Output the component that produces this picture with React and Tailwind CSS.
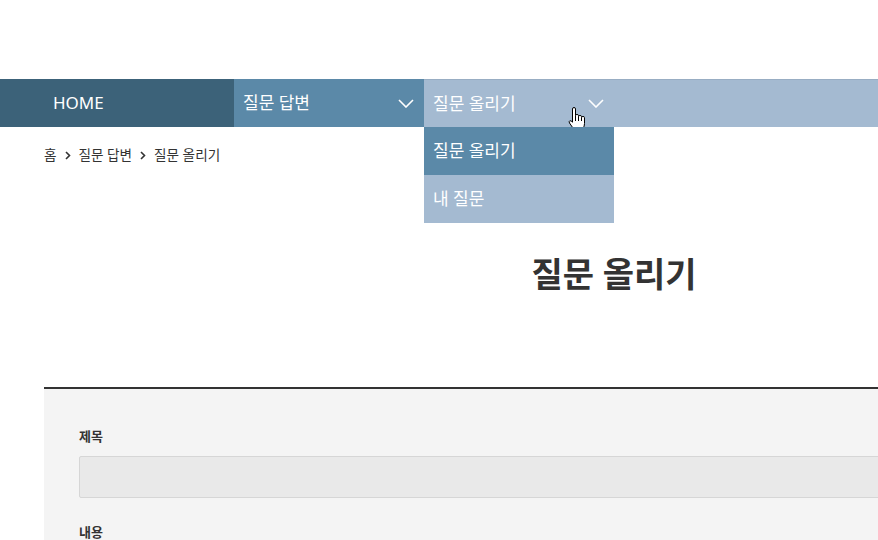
import React from "react";

const Chevron = ({ className = "" }) => (
  <svg className={className} width="16" height="9" viewBox="0 0 16 9" fill="none">
    <path d="M1 1l7 7 7-7" stroke="white" strokeWidth="1.6" />
  </svg>
);

const Crumb = () => (
  <svg width="6" height="9" viewBox="0 0 6 9" fill="none" className="mx-[8px]">
    <path d="M1 1l3.5 3.5L1 8" stroke="#333" strokeWidth="1.6" />
  </svg>
);

const Hand = () => (
  <svg width="18" height="23" viewBox="0 0 18 23" className="absolute left-[568px] top-[107px]">
    <path
      d="M4.5 2Q4.5 0.5 6 0.5Q7.5 0.5 7.5 2V8.5Q7.5 7.5 9 7.5Q10.5 7.5 10.5 8.5V9.5Q10.5 8.5 12 8.5Q13.5 8.5 13.5 9.5V10.5Q13.5 9.5 15 9.5Q16.5 9.5 16.5 10.5V16.5Q16.5 18.5 15 22.5H6L1.5 16Q0.6 14.4 1.8 13.8Q3 13.3 4.5 15.2Z"
      fill="white"
      stroke="black"
      strokeWidth="1"
      strokeLinejoin="round"
    />
    <path d="M7.5 8.5V14M10.5 9.5V14M13.5 10.5V14" stroke="black" strokeWidth="1" />
  </svg>
);

export default function App() {
  return (
    <div
      className="relative w-[878px] h-[540px] overflow-hidden bg-white text-[#333]"
      style={{ fontFamily: '"Noto Sans", "Noto Sans CJK KR", sans-serif' }}
    >
      <div className="h-[79px]" />
      <nav className="flex h-[48px] w-[1228px]">
        <div className="w-[234px] bg-[#3c6279] text-white flex items-center pl-[53px] text-[17px]">HOME</div>
        <div className="w-[190px] bg-[#5b89a8] text-white flex items-center justify-between pl-[9px] pr-[10px] text-[17px]">
          <span>질문 답변</span>
          <Chevron />
        </div>
        <div className="relative flex-1 bg-[#a4bad1] border-t border-[#98adc3] text-white text-[17px]">
          <div className="w-[190px] h-full flex items-center justify-between pl-[9px] pr-[10px]">
            <span>질문 올리기</span>
            <Chevron />
          </div>
          <div className="absolute left-0 top-[47px] w-[190px] z-10">
            <div className="h-[48px] bg-[#5b89a8] flex items-center pl-[9px]">질문 올리기</div>
            <div className="h-[48px] bg-[#a4bad1] flex items-center pl-[9px]">내 질문</div>
          </div>
        </div>
      </nav>
      <div className="ml-[44px] w-[1140px]">
        <div className="flex items-center h-[56px] text-[13.6px] text-[#333]">
          <span>홈</span>
          <Crumb />
          <span>질문 답변</span>
          <Crumb />
          <span>질문 올리기</span>
        </div>
        <h1 className="text-center text-[34px] font-bold text-[#333] mt-[68px] leading-[46px]">질문 올리기</h1>
        <div className="mt-[90px] border-t-2 border-[#333] bg-[#f4f4f4] px-[35px] pt-[37px] h-[200px]">
          <div className="text-[13px] font-bold text-[#333] leading-[20px]">제목</div>
          <div className="mt-[10px] h-[42px] bg-[#e9e9e9] border border-[#d6d6d6] rounded-[2px]" />
          <div className="mt-[24px] text-[13px] font-bold text-[#333] leading-[20px]">내용</div>
        </div>
      </div>
      <Hand />
    </div>
  );
}
